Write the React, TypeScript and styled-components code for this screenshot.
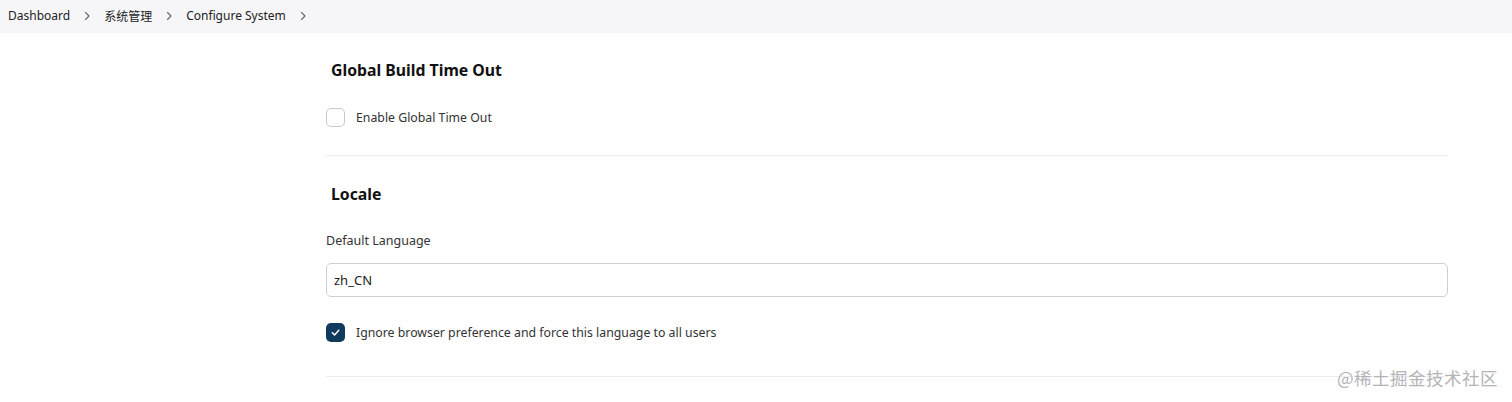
import React from "react";
import styled, { createGlobalStyle } from "styled-components";

const Global = createGlobalStyle`
  html, body { margin: 0; padding: 0; background: #fff; }
  body { font-family: "Noto Sans", "Noto Sans CJK SC", sans-serif; color: #1d1d1f; }
`;

const Page = styled.div`
  width: 1512px;
  height: 402px;
  overflow: hidden;
  position: relative;
  background: #fff;
`;

const Breadcrumbs = styled.nav`
  height: 33px;
  box-sizing: border-box;
  padding: 0 0 2px 8px;
  background: #f6f6f8;
  display: flex;
  align-items: center;
  font-size: 12px;
  color: #222;
`;

const Crumb = styled.span`
  white-space: nowrap;
`;

const Chevron = styled.span`
  display: inline-flex;
  width: 34px;
  justify-content: center;
  color: #777;
`;

const Main = styled.main`
  margin-left: 326px;
  width: 1122px;
  padding-top: 26px;
`;

const Section = styled.section<{ $pb: number }>`
  border-bottom: 1px solid #ececef;
  padding-bottom: ${(p) => p.$pb}px;
  margin-bottom: 27px;
`;

const Heading = styled.h2`
  margin: 0 0 0 5px;
  font-size: 15.8px;
  font-weight: 700;
  line-height: 22px;
  color: #111;
`;

const CheckRow = styled.label`
  display: flex;
  align-items: center;
  gap: 11px;
  font-size: 12.3px;
  color: #333;
  height: 20px;
`;

const Box = styled.span<{ $checked?: boolean }>`
  width: 19px;
  height: 19px;
  border-radius: 5px;
  box-sizing: border-box;
  border: ${(p) => (p.$checked ? "none" : "1.5px solid #c8c8cc")};
  background: ${(p) => (p.$checked ? "#0e3a5e" : "#fff")};
  display: inline-flex;
  align-items: center;
  justify-content: center;
`;

const FieldLabel = styled.div`
  font-size: 12.5px;
  color: #333;
  line-height: 18px;
`;

const Input = styled.div`
  box-sizing: border-box;
  height: 34px;
  border: 1.5px solid #cfcfd3;
  border-radius: 5px;
  display: flex;
  align-items: center;
  padding-left: 7px;
  font-size: 13px;
  color: #222;
`;

const Spacer = styled.div<{ $h: number }>`
  height: ${(p) => p.$h}px;
`;

const Watermark = styled.div`
  position: absolute;
  right: 14px;
  bottom: 12px;
  font-family: "Noto Sans CJK SC", sans-serif;
  font-size: 17.5px;
  color: #b4b4b8;
  letter-spacing: 0.5px;
`;

const Check = () => (
  <svg width="11" height="11" viewBox="0 0 12 12" fill="none">
    <path d="M2.5 6.3 L5 8.6 L9.6 3.6" stroke="#fff" strokeWidth="1.6" strokeLinecap="round" strokeLinejoin="round" />
  </svg>
);

const ChevronIcon = () => (
  <svg width="8" height="10" viewBox="0 0 8 10" fill="none">
    <path d="M2.5 1.5 L6 5 L2.5 8.5" stroke="#666" strokeWidth="1.1" strokeLinecap="round" strokeLinejoin="round" />
  </svg>
);

export default function App() {
  return (
    <Page>
      <Global />
      <Breadcrumbs>
        <Crumb>Dashboard</Crumb>
        <Chevron><ChevronIcon /></Chevron>
        <Crumb>系统管理</Crumb>
        <Chevron><ChevronIcon /></Chevron>
        <Crumb>Configure System</Crumb>
        <Chevron><ChevronIcon /></Chevron>
      </Breadcrumbs>
      <Main>
        <Section $pb={28}>
          <Heading>Global Build Time Out</Heading>
          <Spacer $h={26} />
          <CheckRow>
            <Box />
            Enable Global Time Out
          </CheckRow>
        </Section>
        <Section $pb={34}>
          <Heading>Locale</Heading>
          <Spacer $h={27} />
          <FieldLabel>Default Language</FieldLabel>
          <Spacer $h={13} />
          <Input>zh_CN</Input>
          <Spacer $h={25} />
          <CheckRow>
            <Box $checked><Check /></Box>
            Ignore browser preference and force this language to all users
          </CheckRow>
        </Section>
      </Main>
      <Watermark>@稀土掘金技术社区</Watermark>
    </Page>
  );
}
